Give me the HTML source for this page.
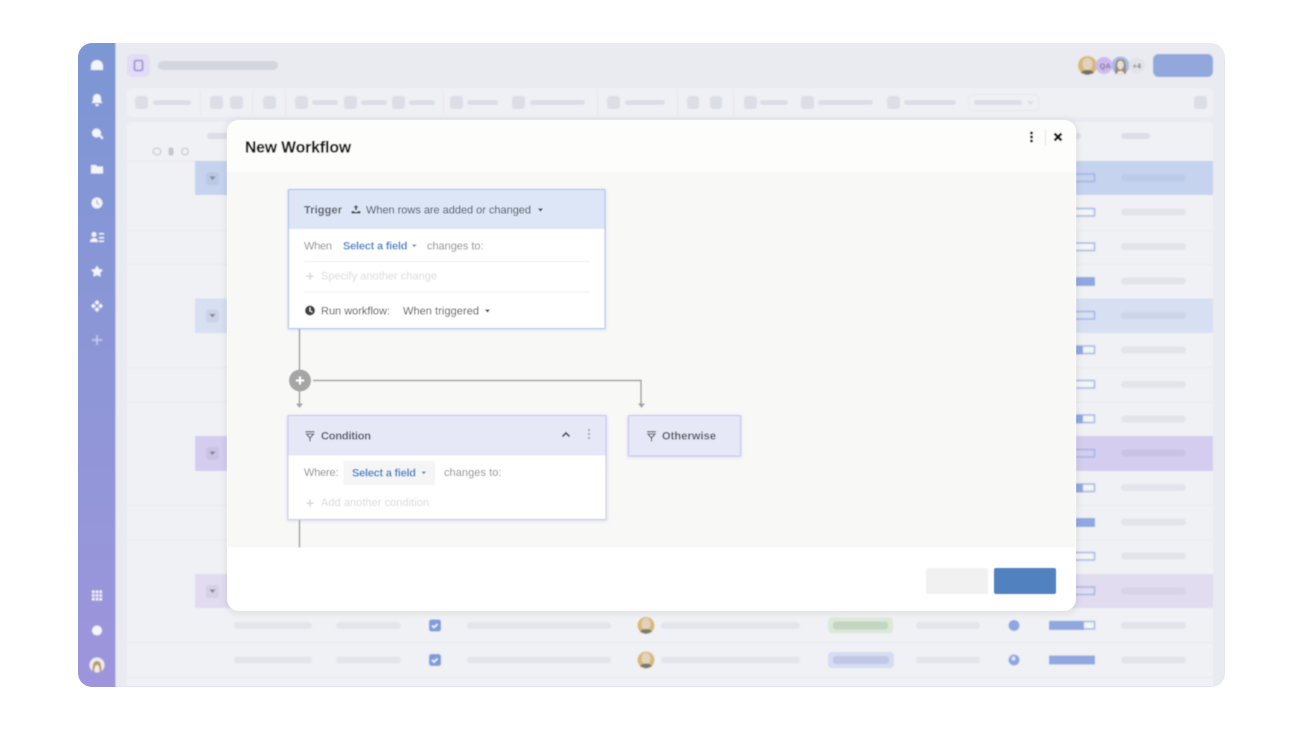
<!DOCTYPE html>
<html lang="en"><head><meta charset="utf-8"><title>New Workflow</title>
<style>
html,body{margin:0;padding:0;background:#fff;width:1300px;height:731px;overflow:hidden}
svg{display:block;font-family:"Liberation Sans",Arial,sans-serif}
.p{fill:#e3e5eb}.s{fill:#dcdee6}.h{fill:#fff}
.t{font-size:11px;fill:#8a8a8a}.d{font-size:11px;fill:#47474a}.b{font-size:11px;font-weight:bold;fill:#55555b}.l{font-size:11px;font-weight:bold;fill:#3f85c9}.g{font-size:11px;fill:#dadada}
</style></head><body>
<svg width="1300" height="731" viewBox="0 0 1300 731" xmlns="http://www.w3.org/2000/svg">
<defs>
<linearGradient id="side" x1="0" y1="0" x2="0" y2="1"><stop offset="0" stop-color="#7c96d3"/><stop offset="1" stop-color="#9e95dc"/></linearGradient>
<clipPath id="frame"><rect x="78" y="43" width="1147" height="644" rx="14"/></clipPath>
<filter id="b1" x="-5%" y="-5%" width="110%" height="110%"><feGaussianBlur stdDeviation="0.9"/></filter>
<filter id="b2" x="-5%" y="-5%" width="110%" height="110%"><feGaussianBlur stdDeviation="0.4"/></filter>
<filter id="sh" x="-5%" y="-5%" width="110%" height="110%"><feGaussianBlur stdDeviation="3"/></filter>
<filter id="cs" x="-5%" y="-5%" width="110%" height="110%"><feGaussianBlur stdDeviation="1"/></filter>
</defs>

<g clip-path="url(#frame)"><g filter="url(#b1)">
<rect x="70" y="35" width="1165" height="660" fill="#e9ebf0"/>
<rect x="70" y="35" width="45.500" height="660" fill="url(#side)"/>
<!-- sidebar icons -->
<g fill="#fff" fill-opacity=".9">
<path d="M91 70v-4a6 6 0 0 1 12 0v4z"/>
<path d="M97 94a4 4 0 0 1 4 4v3l1.500 2h-11l1.500-2v-3a4 4 0 0 1 4-4zM95.500 104h3v2h-3z"/>
<circle cx="96.500" cy="133" r="4.500"/><path d="M99 136l2-1 2.500 3-1.500 1.500z"/>
<path d="M91 165h5l1 1.500h6v7H91z"/>
<path fill-rule="evenodd" d="M97 197.500a5.500 5.500 0 1 1 0 11 5.500 5.500 0 0 1 0-11zM96.500 200v3.500l2.500 1.500.5-.8-2-1.200V200z"/>
<circle cx="94" cy="234.500" r="2.500"/><path d="M90 242a4 4 0 0 1 8 0zM99 233h5v1.500h-5zM99 237h5v1.500h-5zM99 240.500h5v1.500h-5z"/>
<path d="M97 265.500l2 3.500 4 .8-2.800 3 .5 4-3.700-1.800-3.700 1.800.5-4-2.800-3 4-.8z"/>
<path d="M97 300l2.500 2.500L97 305l-2.500-2.500zM97 307l2.500 2.500L97 312l-2.500-2.500zM93.500 303.500L96 306l-2.500 2.500L91 306zM100.500 303.500L103 306l-2.500 2.500L98 306z"/>
<path d="M96.300 335h1.400v4.300H102v1.400h-4.300V345h-1.400v-4.300H92v-1.400h4.300z" fill-opacity=".55"/>
<path d="M92 590.500h2.600v2.600H92zM95.700 590.500h2.600v2.600h-2.600zM99.400 590.500H102v2.600h-2.600zM92 594.200h2.600v2.600H92zM95.700 594.200h2.600v2.600h-2.600zM99.400 594.200H102v2.600h-2.600zM92 597.900h2.600v2.600H92zM95.700 597.900h2.600v2.600h-2.600zM99.400 597.900H102v2.600h-2.600z"/>
<circle cx="97" cy="630.500" r="5"/>
</g>
<circle cx="97" cy="665" r="7.500" fill="#f0ece8"/><path d="M92.500 672c0-8 1-11 4.500-11s4.500 3 4.500 11h-1.800c-.3-3-.3-7-2.700-7s-2.400 4-2.700 7z" fill="#b79a78"/>

<!-- top bar -->
<rect x="127" y="54" width="23" height="23" rx="5" fill="#e2dcf4"/>
<rect x="134.500" y="60.500" width="8" height="10" rx="1.500" fill="none" stroke="#9a86d6" stroke-width="1.600"/>
<rect x="158" y="61" width="120" height="9" rx="4.500" fill="#d3d6df"/>
<circle cx="1087.500" cy="65.500" r="9.500" fill="#d9b873"/><ellipse cx="1087.500" cy="64" rx="5" ry="6" fill="#e3d3be"/><path d="M1081 73c1-4 12-4 13 0l-6.500 2z" fill="#6f7068"/>
<circle cx="1104" cy="65.500" r="8.500" fill="#cdb9ef"/>
<text x="1099.500" y="68.500" font-size="7.500" font-weight="bold" fill="#7b7390">QA</text>
<circle cx="1120.500" cy="65.500" r="9" fill="#a6bde6"/><path d="M1115 74c0-10 0-15 5.500-15s5.500 5 5.500 15z" fill="#9a8a78"/><ellipse cx="1120.500" cy="65" rx="3.200" ry="4.500" fill="#eadfd5"/><path d="M1117 74c0-4 7-4 7 0z" fill="#efe9e2"/>
<circle cx="1137" cy="65.500" r="8" fill="#e2e3e8"/>
<text x="1132.500" y="68.500" font-size="7.500" font-weight="bold" fill="#777">+4</text>
<rect x="1153" y="54" width="60" height="23" rx="5.500" fill="#92a8dc"/>

<!-- toolbar -->
<rect x="127" y="88" width="1086" height="29" rx="5" fill="#eff0f4"/>
<g class="s">
<rect x="135" y="96" width="13" height="13" rx="3"/><rect x="210" y="96" width="13" height="13" rx="3"/><rect x="230" y="96" width="13" height="13" rx="3"/><rect x="263" y="96" width="13" height="13" rx="3"/>
<rect x="295" y="96" width="13" height="13" rx="3"/><rect x="344" y="96" width="13" height="13" rx="3"/><rect x="392" y="96" width="13" height="13" rx="3"/><rect x="450" y="96" width="13" height="13" rx="3"/>
<rect x="512" y="96" width="13" height="13" rx="3"/><rect x="607" y="96" width="13" height="13" rx="3"/><rect x="687" y="96" width="12" height="13" rx="3"/><rect x="710" y="96" width="12" height="13" rx="3"/>
<rect x="744" y="96" width="13" height="13" rx="3"/><rect x="801" y="96" width="13" height="13" rx="3"/><rect x="887" y="96" width="13" height="13" rx="3"/><rect x="1194" y="96" width="13" height="13" rx="3"/>
<rect x="153" y="100" width="38" height="5" rx="2.500"/><rect x="312" y="100" width="26" height="5" rx="2.500"/><rect x="361" y="100" width="26" height="5" rx="2.500"/><rect x="409" y="100" width="26" height="5" rx="2.500"/>
<rect x="467" y="100" width="31" height="5" rx="2.500"/><rect x="530" y="100" width="55" height="5" rx="2.500"/><rect x="625" y="100" width="40" height="5" rx="2.500"/><rect x="760" y="100" width="28" height="5" rx="2.500"/>
<rect x="818" y="100" width="55" height="5" rx="2.500"/><rect x="904" y="100" width="52" height="5" rx="2.500"/><rect x="974" y="100" width="48" height="5" rx="2.500"/>
</g>
<g fill="#e7e8ed"><rect x="200" y="90" width="1" height="25"/><rect x="252" y="90" width="1" height="25"/><rect x="285" y="90" width="1" height="25"/><rect x="443" y="90" width="1" height="25"/><rect x="597" y="90" width="1" height="25"/><rect x="677" y="90" width="1" height="25"/><rect x="733" y="90" width="1" height="25"/></g>
<rect x="968.500" y="94.500" width="70" height="16" rx="4" fill="none" stroke="#e6e7ec"/>
<path d="M1028 101l2.500 2.500 2.500-2.500" fill="none" stroke="#ccced6"/>

<!-- table -->
<rect x="127" y="122" width="1086" height="570" rx="5" fill="#f0f1f4"/>
<rect x="207" y="133" width="30" height="6" rx="3" fill="#dcdee6"/><rect x="1060" y="133" width="21" height="6" rx="3" fill="#dcdee6"/><rect x="1121" y="133" width="29" height="6" rx="3" fill="#dcdee6"/>
<g fill="none" stroke="#c4c6cf" stroke-width="1.200"><ellipse cx="157" cy="151.500" rx="4" ry="3.300"/><circle cx="185" cy="151.500" r="3.300"/></g><rect x="168.500" y="147.500" width="5" height="8" rx="2" fill="#c4c6cf"/>
<g fill="#e9eaef"><rect x="127" y="160.500" width="1086" height="1"/><rect x="127" y="230" width="1086" height="1"/><rect x="127" y="264" width="1086" height="1"/><rect x="127" y="367" width="1086" height="1"/><rect x="127" y="401.500" width="1086" height="1"/><rect x="127" y="505" width="1086" height="1"/><rect x="127" y="539.500" width="1086" height="1"/><rect x="127" y="642" width="1086" height="1"/><rect x="127" y="677" width="1086" height="1"/></g>
<rect x="195" y="161" width="1018" height="34" fill="#c5d3ef"/>
<rect x="195" y="298.500" width="1018" height="34.500" fill="#d7dff2"/>
<rect x="195" y="436" width="1018" height="35" fill="#d5cdf0"/>
<rect x="195" y="574" width="1018" height="34" fill="#e1dcf0"/>
<g fill="#000" fill-opacity=".05"><rect x="206" y="172" width="13" height="13" rx="3"/><rect x="206" y="309.500" width="13" height="13" rx="3"/><rect x="206" y="447" width="13" height="13" rx="3"/><rect x="206" y="585" width="13" height="13" rx="3"/></g>
<g fill="#7e8089"><path d="M209.500 176.500h6l-3 3.500zM209.500 314h6l-3 3.500zM209.500 451.500h6l-3 3.500zM209.500 589.500h6l-3 3.500z"/></g>

<!-- right column pills -->
<g fill="#e2e4ea"><rect x="1121" y="208.500" width="65" height="7" rx="3.500"/><rect x="1121" y="243" width="65" height="7" rx="3.500"/><rect x="1121" y="277.500" width="65" height="7" rx="3.500"/><rect x="1121" y="346.500" width="65" height="7" rx="3.500"/><rect x="1121" y="381" width="65" height="7" rx="3.500"/><rect x="1121" y="415.500" width="65" height="7" rx="3.500"/><rect x="1121" y="484" width="65" height="7" rx="3.500"/><rect x="1121" y="518.500" width="65" height="7" rx="3.500"/><rect x="1121" y="552.500" width="65" height="7" rx="3.500"/><rect x="1121" y="622" width="65" height="7" rx="3.500"/><rect x="1121" y="656.500" width="65" height="7" rx="3.500"/></g>
<rect x="1121" y="174.500" width="65" height="7" rx="3.500" fill="#bccbe8"/><rect x="1121" y="312" width="65" height="7" rx="3.500" fill="#cdd5ea"/><rect x="1121" y="449.500" width="65" height="7" rx="3.500" fill="#cbc3e6"/><rect x="1121" y="587.500" width="65" height="7" rx="3.500" fill="#d8d4e8"/>
<!-- progress bars -->
<g fill="#f3f4f8" stroke="#9db2e2" stroke-width="1.400"><rect x="1050" y="174" width="44.500" height="7.500" fill="#c5d3ef"/><rect x="1050" y="208.500" width="44.500" height="7.500"/><rect x="1050" y="243" width="44.500" height="7.500"/><rect x="1050" y="311.500" width="44.500" height="7.500" fill="#d7dff2"/><rect x="1050" y="346" width="44.500" height="7.500"/><rect x="1050" y="380.500" width="44.500" height="7.500"/><rect x="1050" y="415" width="44.500" height="7.500"/><rect x="1050" y="449.500" width="44.500" height="7.500" fill="#d5cdf0"/><rect x="1050" y="484" width="44.500" height="7.500"/><rect x="1050" y="552.500" width="44.500" height="7.500"/><rect x="1050" y="587" width="44.500" height="7.500" fill="#e1dcf0"/><rect x="1050" y="621.500" width="44.500" height="7.500"/></g>
<g fill="#90a7e0"><rect x="1049" y="277" width="46" height="9"/><rect x="1049" y="518" width="46" height="9"/><rect x="1049" y="655.500" width="46" height="9"/><rect x="1049" y="345.500" width="34" height="9"/><rect x="1049" y="414.500" width="34" height="9"/><rect x="1049" y="483.500" width="34" height="9"/><rect x="1049" y="621" width="35" height="9"/></g>

<!-- bottom rows -->
<g fill="#e3e5eb"><rect x="234" y="622" width="78" height="7" rx="3.500"/><rect x="336" y="622" width="65" height="7" rx="3.500"/><rect x="467" y="622" width="144" height="7" rx="3.500"/><rect x="661" y="622" width="139" height="7" rx="3.500"/><rect x="916" y="622" width="64" height="7" rx="3.500"/>
<rect x="234" y="656.500" width="78" height="7" rx="3.500"/><rect x="336" y="656.500" width="65" height="7" rx="3.500"/><rect x="467" y="656.500" width="144" height="7" rx="3.500"/><rect x="661" y="656.500" width="139" height="7" rx="3.500"/><rect x="916" y="656.500" width="64" height="7" rx="3.500"/></g>
<rect x="429" y="619.500" width="12" height="12" rx="2.500" fill="#7f9cda"/><rect x="429" y="654" width="12" height="12" rx="2.500" fill="#7f9cda"/>
<path d="M432 625.500l2 2 3.500-3.500M432 660l2 2 3.500-3.500" fill="none" stroke="#fff" stroke-width="1.500"/>
<g><circle cx="646" cy="625.500" r="8.500" fill="#d9b873"/><ellipse cx="646" cy="624" rx="4.500" ry="6" fill="#e3d3be"/><path d="M640 632c1-4 11-4 12 0l-6 2z" fill="#777a70"/>
<circle cx="646" cy="660" r="8.500" fill="#d9b873"/><ellipse cx="646" cy="658.500" rx="4.500" ry="6" fill="#e3d3be"/><path d="M640 666.500c1-4 11-4 12 0l-6 2z" fill="#777a70"/></g>
<rect x="828" y="617.500" width="65" height="16" rx="4" fill="#dce8d9"/><rect x="833" y="621.500" width="55" height="8" rx="3" fill="#c3d6c1"/>
<rect x="828" y="652" width="66" height="16" rx="4" fill="#d6dcf3"/><rect x="833" y="656" width="56" height="8" rx="3" fill="#c0c8e6"/>
<circle cx="1014" cy="625.500" r="5.500" fill="#8ea6e2"/><circle cx="1014" cy="660" r="5.500" fill="#8ea6e2"/><circle cx="1013.500" cy="658.500" r="2" fill="#dfe5f6"/>
</g>
<path d="M1224.500 60v613a13.500 13.500 0 0 1-13.500 13.500H116" fill="none" stroke="#e2e4f6" stroke-width="1"/>
</g>

<!-- modal -->
<rect x="225" y="119" width="853" height="495" rx="13" fill="#000" fill-opacity=".07" filter="url(#sh)"/>
<rect x="227" y="120" width="849" height="491" rx="12" fill="#fff"/>
<g filter="url(#b2)">
<path d="M227 172v-40a12 12 0 0 1 12-12h825a12 12 0 0 1 12 12v40z" fill="#fdfdfc"/>
<rect x="227" y="172" width="849" height="375.500" fill="#f8f8f7"/>
<text x="245" y="152.500" font-size="15.500" font-weight="bold" fill="#1f1f23" stroke="#1f1f23" stroke-width=".25" textLength="106" lengthAdjust="spacing">New Workflow</text>
<g fill="#2f2f2f"><circle cx="1031.500" cy="133" r="1.500"/><circle cx="1031.500" cy="137" r="1.500"/><circle cx="1031.500" cy="141" r="1.500"/></g>
<rect x="1045" y="129" width="1" height="16" fill="#e6e6e6"/>
<path d="M1054.500 133.500l7 7M1061.500 133.500l-7 7" stroke="#151515" stroke-width="2.600" fill="none"/>

<!-- connectors -->
<g fill="none" stroke="#a2a2a2" stroke-width="1.500">
<path d="M299.500 329v41M299.500 391v14M313 380.500h328v25M299.500 520v27.500"/>
</g>
<path d="M296 403.500h7l-3.500 4.500zM638 403.500h7l-3.500 4.500z" fill="#a2a2a2"/>
<circle cx="300" cy="380.500" r="11" fill="#a6a6a6"/>
<path d="M299 376.500h2v3h3v2h-3v3h-2v-3h-3v-2h3z" fill="#fff"/>

<!-- trigger card -->
<rect x="287" y="189" width="319.500" height="141.500" rx="2" fill="#8fa9d8" fill-opacity=".25" filter="url(#cs)"/>
<rect x="288" y="189" width="317.500" height="140" rx="1.500" fill="#a9c1e8"/>
<rect x="289" y="190" width="315.500" height="138" fill="#fff"/>
<rect x="289" y="190" width="315.500" height="39" fill="#dce6f7"/>
<text x="304" y="213.500" class="b" textLength="38">Trigger</text>
<path d="M356 205l2.500 2.500h-1.500v2.500h-2v-2.500h-1.500zM351.500 211h2.500l1 1h2l1-1h2.500v2.500h-9z" fill="#4f4f52"/>
<text x="366" y="213.500" class="d" textLength="165">When rows are added or changed</text>
<path d="M538 208.500h5l-2.500 3z" fill="#333"/>
<text x="304" y="249.500" class="t" textLength="28">When</text>
<text x="343" y="249.500" class="l" textLength="64.500">Select a field</text>
<path d="M412 244.500h4.500l-2.250 2.800z" fill="#3f85c9"/>
<text x="427" y="249.500" class="t" textLength="56.500">changes to:</text>
<rect x="304" y="261" width="286" height="1" fill="#eeeeee"/>
<path d="M309.300 272.500h1.400v3h3v1.400h-3v3h-1.400v-3h-3v-1.400h3z" fill="#d6d6d6"/>
<text x="321" y="279.500" class="g" textLength="116">Specify another change</text>
<rect x="304" y="291.500" width="286" height="1" fill="#eeeeee"/>
<circle cx="310" cy="310.500" r="5" fill="#3f3f42"/><path d="M310 307.500v3.300l2.300 1.300" stroke="#fff" fill="none" stroke-width="1"/>
<text x="321" y="314.500" class="d" textLength="69">Run workflow:</text>
<text x="403" y="314.500" class="d" textLength="76">When triggered</text>
<path d="M485 309.500h5l-2.500 3z" fill="#333"/>

<!-- condition card -->
<rect x="286.500" y="415" width="321" height="106.500" rx="2" fill="#a9a9e0" fill-opacity=".3" filter="url(#cs)"/>
<rect x="287.500" y="415" width="319" height="105" rx="1.500" fill="#c5c5ec"/>
<rect x="288.500" y="416" width="317" height="103" fill="#fff"/>
<rect x="288.500" y="416" width="317" height="39.500" fill="#e6e7f7"/>
<path d="M305.500 431.800h9M306.500 434l3.500 4 3.500-4zM310 438v3.500" fill="none" stroke="#55555a" stroke-width="1.100"/>
<text x="321" y="439.500" class="b" textLength="50">Condition</text>
<path d="M562.500 436.500l3.500-3.500 3.500 3.500" fill="none" stroke="#45454a" stroke-width="1.700"/>
<g fill="#a2a2aa"><circle cx="589" cy="430" r="1.100"/><circle cx="589" cy="434" r="1.100"/><circle cx="589" cy="438" r="1.100"/></g>
<text x="304" y="476" class="t" textLength="34.500">Where:</text>
<rect x="343.500" y="461" width="91.500" height="24" rx="1.500" fill="#f5f5f5"/>
<text x="352" y="476.500" class="l" textLength="64">Select a field</text>
<path d="M421.500 471.500h4.500l-2.250 2.800z" fill="#3f85c9"/>
<text x="444" y="476" class="t" textLength="57.500">changes to:</text>
<path d="M309.300 499.500h1.400v3h3v1.400h-3v3h-1.400v-3h-3v-1.400h3z" fill="#d6d6d6"/>
<text x="321" y="506" class="g" textLength="108">Add another condition</text>

<!-- otherwise -->
<rect x="627" y="415" width="115" height="43" rx="2" fill="#a9a9e0" fill-opacity=".3" filter="url(#cs)"/>
<rect x="628" y="415" width="113" height="41.500" rx="1.500" fill="#c5c5ec"/>
<rect x="629" y="416" width="111" height="39.500" fill="#e6e7f7"/>
<path d="M647 431.800h9M648 434l3.500 4 3.500-4zM651.500 438v3.500" fill="none" stroke="#55555a" stroke-width="1.100"/>
<text x="662" y="439.500" class="b" textLength="54">Otherwise</text>

<!-- footer -->
<rect x="926" y="568" width="62" height="26" rx="2" fill="#f1f1f1"/>
<rect x="994" y="568" width="62" height="26" rx="2" fill="#5181bf"/>
</g>
</svg>
</body></html>
